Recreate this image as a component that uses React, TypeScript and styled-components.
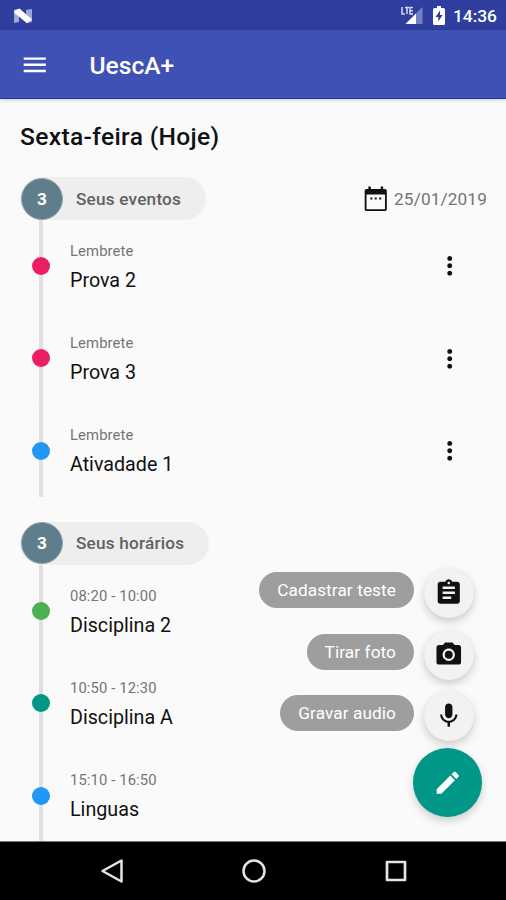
import React from "react";
import styled, { createGlobalStyle } from "styled-components";

const GlobalStyle = createGlobalStyle`
  *, *::before, *::after { box-sizing: border-box; }
  body { margin: 0; background: #fafafa; }
`;

const Screen = styled.div`
  position: relative;
  display: flex;
  flex-direction: column;
  width: 506px;
  height: 900px;
  overflow: hidden;
  background: #fafafa;
  color: #111;
  font-family: Roboto, "Noto Sans", sans-serif;
`;

const StatusBar = styled.div`
  display: flex;
  flex: none;
  align-items: center;
  height: 30px;
  padding: 1px 9px 0 13px;
  background: #303f9f;
`;

const StatusIcons = styled.div`
  display: flex;
  align-items: center;
  gap: 10px;
  margin-left: auto;
`;

const Clock = styled.span`
  margin-left: 8px;
  color: #fff;
  font-size: 17.4px;
  font-weight: 500;
  line-height: 20px;
`;

const Glyph = styled.svg<{ $w: number; $h?: number }>`
  display: block;
  flex: none;
  width: ${(p) => p.$w}px;
  height: ${(p) => p.$h ?? p.$w}px;
`;

const AppBar = styled.header`
  display: flex;
  flex: none;
  align-items: center;
  gap: 40px;
  height: 69px;
  padding: 1px 20px 0;
  background: #3f51b5;
  border-bottom: 1px solid #1c3ba0;
  box-shadow: 0 1px 4px rgba(0, 0, 0, 0.2);
`;

const AppTitle = styled.h1`
  margin: 2px 0 0;
  color: #fff;
  font-size: 24.6px;
  font-weight: 500;
  line-height: 32px;
`;

const Content = styled.main`
  display: flex;
  flex: 1;
  flex-direction: column;
  min-height: 0;
  overflow: hidden;
  padding-top: 22px;
`;

const DayTitle = styled.h2`
  margin: 0 0 24px 20px;
  font-size: 24.6px;
  font-weight: 500;
  letter-spacing: 0.33px;
  line-height: 32px;
`;

const Section = styled.section`
  flex: none;
  margin-bottom: 25px;
`;

const SectionHeader = styled.div`
  display: flex;
  align-items: center;
  justify-content: space-between;
  height: 43px;
  padding: 0 19px 0 20px;
`;

const Pill = styled.div`
  display: flex;
  align-items: center;
  height: 43px;
  padding-right: 25px;
  border-radius: 22px;
  background: #eee;
  color: #616161;
  font-size: 17.2px;
  font-weight: 500;
  letter-spacing: 0.2px;
`;

const Count = styled.span`
  display: flex;
  align-items: center;
  justify-content: center;
  width: 42px;
  height: 42px;
  margin: 0 13px 0 1px;
  border: 1px solid #90a4ae;
  border-radius: 50%;
  background: #607d8b;
  color: #fff;
  font-weight: 700;
`;

const DateLabel = styled.div`
  display: flex;
  align-items: center;
  gap: 4px;
  color: #757575;
  font-size: 17.2px;
  letter-spacing: 0.15px;
`;

const Row = styled.div`
  display: grid;
  grid-template-columns: 42px 1fr 30px;
  align-items: center;
  height: 92.3px;
  padding: 0 41px 0 20px;
`;

const Rail = styled.div`
  display: flex;
  align-items: center;
  justify-content: center;
  align-self: stretch;
  background: linear-gradient(#e0e0e0, #e0e0e0) center / 4px 100% no-repeat;
`;

const Dot = styled.span<{ $color: string }>`
  width: 18px;
  height: 18px;
  border-radius: 50%;
  background: ${(p) => p.$color};
`;

const RowText = styled.div`
  padding: 1px 0 0 8px;
`;

const RowLabel = styled.div`
  color: #757575;
  font-size: 14.8px;
  letter-spacing: 0.12px;
  line-height: 20px;
`;

const RowTitle = styled.div`
  margin-top: 8px;
  font-size: 19.7px;
  line-height: 24px;
`;

const SpeedDial = styled.div`
  position: absolute;
  right: 24px;
  bottom: 83px;
  display: flex;
  flex-direction: column;
  align-items: flex-end;
`;

const DialActions = styled.div`
  display: flex;
  flex-direction: column;
  align-items: flex-end;
  gap: 11.5px;
  margin-bottom: 7px;
  padding-right: 8px;
`;

const DialItem = styled.div`
  display: flex;
  align-items: flex-start;
  gap: 10px;
  height: 50px;
`;

const DialLabel = styled.span`
  margin-top: 4px;
  padding: 0 18px;
  border-radius: 18px;
  background: #9e9e9e;
  color: #fff;
  font-size: 17.2px;
  letter-spacing: 0.1px;
  line-height: 36px;
`;

const RoundButton = styled.button<{ $size: number; $bg: string }>`
  display: flex;
  align-items: center;
  justify-content: center;
  width: ${(p) => p.$size}px;
  height: ${(p) => p.$size}px;
  padding: 0;
  border: 0;
  border-radius: 50%;
  background: ${(p) => p.$bg};
  box-shadow: 0 4px 8px rgba(0, 0, 0, 0.18), 0 0 2px rgba(0, 0, 0, 0.05);
`;

const NavBar = styled.nav`
  display: flex;
  flex: none;
  align-items: center;
  justify-content: center;
  gap: 118px;
  height: 59px;
  padding-left: 1px;
  border-top: 1px solid #777;
  background: #000;
`;

const ICONS = {
  menu: "M3 18h18v-2H3v2zm0-5h18v-2H3v2zm0-7v2h18V6H3z",
  more: "M12 8c1.1 0 2-.9 2-2s-.9-2-2-2-2 .9-2 2 .9 2 2 2zm0 2c-1.1 0-2 .9-2 2s.9 2 2 2 2-.9 2-2-.9-2-2-2zm0 6c-1.1 0-2 .9-2 2s.9 2 2 2 2-.9 2-2-.9-2-2-2z",
  calendar:
    "M9.2 11H7.6v1.6h1.6V11zm3.6 0h-1.6v1.6h1.6V11zm3.6 0h-1.6v1.6h1.6V11zM19.5 4H18V2h-2v2H8V2H6v2H4.500C3.700 4 3 4.700 3 5.500v15c0 .8.7 1.500 1.500 1.500h15c.8 0 1.500-.7 1.500-1.500v-15c0-.8-.7-1.500-1.500-1.500zm0 16.500h-15V8.500h15v12z",
  clipboard:
    "M19 3h-4.180C14.400 1.840 13.300 1 12 1c-1.300 0-2.400.84-2.820 2H5c-1.100 0-2 .9-2 2v14c0 1.100.9 2 2 2h14c1.100 0 2-.9 2-2V5c0-1.100-.9-2-2-2zm-7 0c.55 0 1 .45 1 1s-.45 1-1 1-1-.45-1-1 .45-1 1-1zm2 14H7v-2h7v2zm3-4H7v-2h10v2zm0-4H7V7h10v2z",
  camera:
    "M12 8.800a3.200 3.200 0 1 0 0 6.400 3.200 3.200 0 0 0 0-6.400zM9 2L7.170 4H4c-1.100 0-2 .9-2 2v12c0 1.100.9 2 2 2h16c1.100 0 2-.9 2-2V6c0-1.100-.9-2-2-2h-3.170L15 2H9zm3 15c-2.760 0-5-2.240-5-5s2.240-5 5-5 5 2.240 5 5-2.240 5-5 5z",
  mic: "M12 14c1.660 0 2.990-1.340 2.990-3L15 5c0-1.660-1.340-3-3-3S9 3.340 9 5v6c0 1.660 1.340 3 3 3zm5.300-3c0 3-2.540 5.100-5.300 5.100S6.700 14 6.700 11H5c0 3.410 2.720 6.230 6 6.720V21h2v-3.280c3.280-.48 6-3.300 6-6.720h-1.700z",
  pencil:
    "M3 17.250V21h3.750L17.810 9.940l-3.750-3.750L3 17.250zM20.710 7.040c.39-.39.39-1.020 0-1.410l-2.340-2.340c-.39-.39-1.020-.39-1.410 0l-1.830 1.830 3.750 3.750 1.830-1.830z",
};

function Icon({ name, size = 29.5, color = "#111" }: { name: keyof typeof ICONS; size?: number; color?: string }) {
  return (
    <Glyph $w={size} viewBox="0 0 24 24" fill={color} aria-hidden>
      <path d={ICONS[name]} />
    </Glyph>
  );
}

type Entry = { label: string; title: string; color: string };

const EVENTS: Entry[] = [
  { label: "Lembrete", title: "Prova 2", color: "#e91e63" },
  { label: "Lembrete", title: "Prova 3", color: "#e91e63" },
  { label: "Lembrete", title: "Ativadade 1", color: "#2196f3" },
];

const CLASSES: Entry[] = [
  { label: "08:20 - 10:00", title: "Disciplina 2", color: "#4caf50" },
  { label: "10:50 - 12:30", title: "Disciplina A", color: "#009688" },
  { label: "15:10 - 16:50", title: "Linguas", color: "#2196f3" },
];

const ACTIONS: { label: string; icon: keyof typeof ICONS }[] = [
  { label: "Cadastrar teste", icon: "clipboard" },
  { label: "Tirar foto", icon: "camera" },
  { label: "Gravar audio", icon: "mic" },
];

function Timeline({ entries, menu }: { entries: Entry[]; menu?: boolean }) {
  return (
    <>
      {entries.map((e) => (
        <Row key={e.title}>
          <Rail>
            <Dot $color={e.color} />
          </Rail>
          <RowText>
            <RowLabel>{e.label}</RowLabel>
            <RowTitle>{e.title}</RowTitle>
          </RowText>
          {menu && <Icon name="more" />}
        </Row>
      ))}
    </>
  );
}

export default function App() {
  return (
    <Screen>
      <GlobalStyle />
      <StatusBar>
        <Glyph $w={20} $h={16} viewBox="0 0 20 16" aria-hidden>
          <path d="M1 2l5-1v13l-5 1zM13 2l6-1v13l-6 1z" fill="#9fa8da" />
          <path d="M1.500 2.500L6.500.5 19 11.500 14 15.300 1.500 5z" fill="#fff" />
        </Glyph>
        <StatusIcons>
          <Glyph $w={22} $h={19} viewBox="0 0 22 19" aria-hidden>
            <path d="M21.500 1v17h-17z" fill="#7680c2" />
            <path d="M15 7.500V18H4.500z" fill="#fff" />
            <path
              d="M1 1v7h3M4 1.500h4M6 1.500V8M12 1.500H9V8h3M9 4.700h3"
              fill="none"
              stroke="#d4d8f0"
              strokeWidth="1.500"
            />
          </Glyph>
          <Glyph $w={12} $h={19} viewBox="0 0 12 19" aria-hidden>
            <path
              d="M4 0h4v2h2.500q1.500 0 1.500 1.500v14Q12 19 10.500 19h-9Q0 19 0 17.500v-14Q0 2 1.500 2H4z"
              fill="#fff"
            />
            <path d="M7 4.500L2.500 11H5.300v4.500L9.600 9H7z" fill="#303f9f" />
          </Glyph>
        </StatusIcons>
        <Clock>14:36</Clock>
      </StatusBar>
      <AppBar>
        <Icon name="menu" color="#fff" />
        <AppTitle>UescA+</AppTitle>
      </AppBar>
      <Content>
        <DayTitle>Sexta-feira (Hoje)</DayTitle>
        <Section>
          <SectionHeader>
            <Pill>
              <Count>3</Count>Seus eventos
            </Pill>
            <DateLabel>
              <Icon name="calendar" />
              25/01/2019
            </DateLabel>
          </SectionHeader>
          <Timeline entries={EVENTS} menu />
        </Section>
        <Section>
          <SectionHeader>
            <Pill>
              <Count>3</Count>Seus horários
            </Pill>
          </SectionHeader>
          <Timeline entries={CLASSES} />
        </Section>
      </Content>
      <SpeedDial>
        <DialActions>
          {ACTIONS.map((a) => (
            <DialItem key={a.label}>
              <DialLabel>{a.label}</DialLabel>
              <RoundButton $size={50} $bg="#f2f2f2" aria-label={a.label}>
                <Icon name={a.icon} />
              </RoundButton>
            </DialItem>
          ))}
        </DialActions>
        <RoundButton $size={69} $bg="#009688" aria-label="Editar">
          <Icon name="pencil" color="#fff" />
        </RoundButton>
      </SpeedDial>
      <NavBar>
        <Glyph $w={24} viewBox="0 0 24 24" fill="none" stroke="#e4e4e4" strokeWidth="2.500" strokeLinejoin="round" aria-hidden>
          <path d="M21.500 1.500v21L2.500 12z" />
        </Glyph>
        <Glyph $w={24} viewBox="0 0 24 24" fill="none" stroke="#e4e4e4" strokeWidth="2.500" aria-hidden>
          <circle cx="12" cy="12" r="10.500" />
        </Glyph>
        <Glyph $w={24} viewBox="0 0 24 24" fill="none" stroke="#e4e4e4" strokeWidth="2.700" strokeLinejoin="round" aria-hidden>
          <rect x="3" y="3" width="18" height="18" />
        </Glyph>
      </NavBar>
    </Screen>
  );
}
